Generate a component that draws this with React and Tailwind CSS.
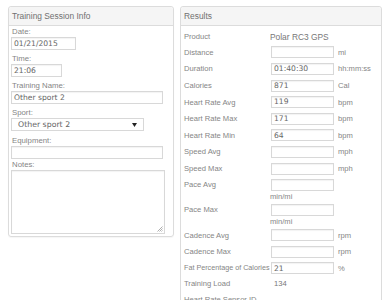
import React from "react";

const sans = { fontFamily: '"Liberation Sans", Arial, sans-serif' };
const inp = { fontFamily: '"DejaVu Sans", Verdana, sans-serif' };

function Input({ value = "", className = "" }) {
  return (
    <div
      className={`border border-[#d8d8d8] bg-white text-[7.6px] text-[#666] pl-[2px] flex items-center leading-none shadow-[inset_0_1px_1px_rgba(0,0,0,0.05)] ${className}`}
      style={inp}
    >
      {value}
    </div>
  );
}

function Label({ children }) {
  return (
    <div className="h-[10px] leading-[10px] text-[7.8px] text-[#858585] pl-[1px]">{children}</div>
  );
}

function Row({ label, value, unit, small }) {
  return (
    <div className="flex items-center h-[16.6px]">
      <div className={`w-[86px] shrink-0 text-[#858585] whitespace-nowrap ${small ? "text-[7.2px]" : "text-[7.6px]"}`}>{label}</div>
      <Input value={value} className="w-[63px] h-[12px] ml-[1px]" />
      <div className="ml-[4px] text-[7.6px] text-[#858585]">{unit}</div>
    </div>
  );
}

function PaceRow({ label }) {
  return (
    <div className="flex h-[25px] pt-[2px]">
      <div className="w-[86px] shrink-0 text-[7.6px] text-[#858585] h-[12px] flex items-center">{label}</div>
      <div className="flex flex-col">
        <Input className="w-[63px] h-[12px] ml-[1px]" />
        <div className="h-[11px] leading-[11px] text-[7.6px] text-[#858585]">min/mi</div>
      </div>
    </div>
  );
}

function TextRow({ label, value, h, offset = 0, size = "7.6px" }) {
  return (
    <div className="flex items-center" style={{ height: h }}>
      <div className="w-[86px] shrink-0 text-[7.6px] text-[#858585] whitespace-nowrap">{label}</div>
      <div className="text-[#777]" style={{ marginLeft: offset, fontSize: size }}>{value}</div>
    </div>
  );
}

export default function App() {
  return (
    <div className="w-[391px] h-[300px] overflow-hidden bg-white flex items-start gap-[6px] pt-[6px] pl-[8px]" style={sans}>
      <div className="w-[166px] h-[231px] border border-[#dcdcdc] rounded-[3px] shrink-0 shadow-[0_1px_1px_rgba(0,0,0,0.04)]">
        <div className="h-[19px] bg-[#f5f5f5] border-b border-[#dcdcdc] rounded-t-[3px] flex items-center pl-[3px] text-[8.4px] text-[#707070]">
          Training Session Info
        </div>
        <div className="pl-[2px] pt-[1px] flex flex-col">
          <Label>Date:</Label>
          <Input value="01/21/2015" className="w-[65px] h-[13px]" />
          <div className="h-[4px]" />
          <Label>Time:</Label>
          <Input value="21:06" className="w-[51px] h-[13px]" />
          <div className="h-[4px]" />
          <Label>Training Name:</Label>
          <Input value="Other sport 2" className="w-[152px] h-[13px]" />
          <div className="h-[4px]" />
          <Label>Sport:</Label>
          <div className="w-[133px] h-[13px] border border-[#d8d8d8] bg-white flex items-center justify-between pl-[6px] pr-[6px] text-[7.8px] text-[#666]" style={inp}>
            <span>Other sport 2</span>
            <svg width="5" height="4" viewBox="0 0 5 4"><path d="M0 0 L5 0 L2.5 4 Z" fill="#222" /></svg>
          </div>
          <div className="h-[5px]" />
          <Label>Equipment:</Label>
          <Input className="w-[152px] h-[13px]" />
          <div className="h-[1px]" />
          <Label>Notes:</Label>
          <div className="relative w-[154px] h-[64px] border border-[#d8d8d8] bg-white shadow-[inset_0_1px_1px_rgba(0,0,0,0.05)]">
            <svg className="absolute right-[1px] bottom-[1px]" width="6" height="6" viewBox="0 0 6 6">
              <path d="M5.5 0.5 L0.5 5.5 M5.5 2.5 L2.5 5.5 M5.5 4.5 L4.5 5.5" stroke="#999" strokeWidth="0.8" />
            </svg>
          </div>
        </div>
      </div>

      <div className="w-[202px] h-[320px] border border-[#dcdcdc] rounded-[3px] shrink-0">
        <div className="h-[19px] bg-[#f5f5f5] border-b border-[#dcdcdc] rounded-t-[3px] flex items-center pl-[3px] text-[8.4px] text-[#707070]">
          Results
        </div>
        <div className="pl-[3px] pt-[3.5px] flex flex-col">
          <TextRow label="Product" value="Polar RC3 GPS" h="14.7px" size="8.4px" />
          <Row label="Distance" unit="mi" />
          <Row label="Duration" value="01:40:30" unit="hh:mm:ss" />
          <Row label="Calories" value="871" unit="Cal" />
          <Row label="Heart Rate Avg" value="119" unit="bpm" />
          <Row label="Heart Rate Max" value="171" unit="bpm" />
          <Row label="Heart Rate Min" value="64" unit="bpm" />
          <Row label="Speed Avg" unit="mph" />
          <Row label="Speed Max" unit="mph" />
          <PaceRow label="Pace Avg" />
          <PaceRow label="Pace Max" />
          <Row label="Cadence Avg" unit="rpm" />
          <Row label="Cadence Max" unit="rpm" />
          <Row label="Fat Percentage of Calories" value="21" unit="%" small />
          <TextRow label="Training Load" value="134" h="14.7px" offset="4px" />
          <TextRow label="Heart Rate Sensor ID" value="" h="16px" />
        </div>
      </div>
    </div>
  );
}
